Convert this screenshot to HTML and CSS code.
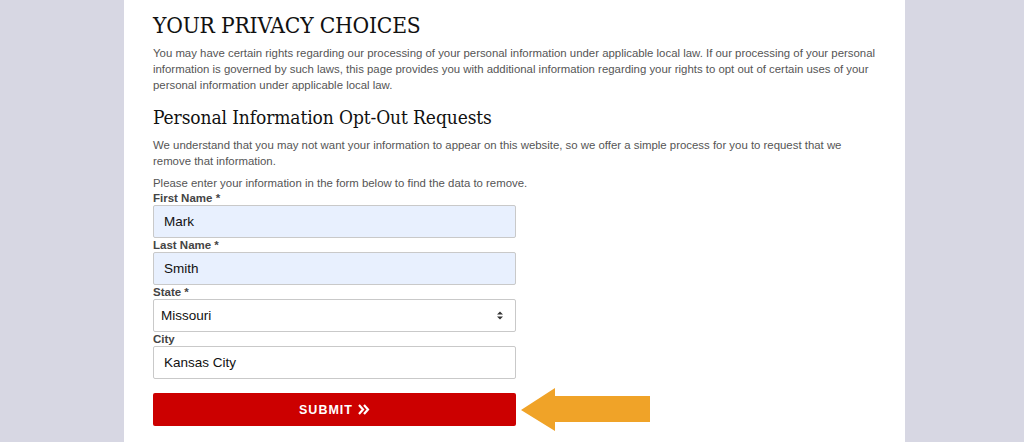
FILE: index.html
```html
<!DOCTYPE html>
<html>
<head>
<meta charset="utf-8">
<link rel="stylesheet" href="styles.css">
</head>
<body>
<main class="page">
  <h1 class="title">YOUR PRIVACY CHOICES</h1>
  <p class="text">You may have certain rights regarding our processing of your personal information under applicable local law. If our processing of your personal information is governed by such laws, this page provides you with additional information regarding your rights to opt out of certain uses of your personal information under applicable local law.</p>
  <h2 class="subtitle">Personal Information Opt-Out Requests</h2>
  <p class="text second">We understand that you may not want your information to appear on this website, so we offer a simple process for you to request that we remove that information.</p>
  <p class="text intro">Please enter your information in the form below to find the data to remove.</p>
  <div class="form-row">
    <form class="form">
      <label class="label">First Name *</label>
      <div class="field filled">Mark</div>
      <label class="label">Last Name *</label>
      <div class="field filled">Smith</div>
      <label class="label">State *</label>
      <div class="field select">Missouri
        <svg class="caret" width="6" height="9" viewBox="0 0 6 9"><path d="M0 3.5 L3 0.5 L6 3.5Z M0 5.5 L3 8.5 L6 5.5Z" fill="#333"/></svg>
      </div>
      <label class="label">City</label>
      <div class="field">Kansas City</div>
      <div class="button">SUBMIT
        <svg class="chev" width="12" height="11" viewBox="0 0 12 11"><path d="M1 1 L5 5.5 L1 10 M6 1 L10 5.5 L6 10" fill="none" stroke="#fff" stroke-width="2.2"/></svg>
      </div>
    </form>
    <svg class="arrow" width="130" height="44" viewBox="0 0 130 44"><path d="M0 22 L34 0 L34 8 L129 8 L129 34 L34 34 L34 43 Z" fill="#f0a328"/></svg>
  </div>
</main>
</body>
</html>
```
FILE: styles.css
```css
html, body { margin: 0; padding: 0; }
body {
  background: #d7d7e3;
  font-family: "Liberation Sans", Arial, sans-serif;
  height: 442px;
  overflow: hidden;
}
.page {
  background: #fff;
  width: 781px;
  margin-left: 124px;
  padding: 10px 26px 0 29px;
  box-sizing: border-box;
  height: 442px;
}
.title {
  font-family: "DejaVu Serif Condensed", "DejaVu Serif", serif;
  font-stretch: condensed;
  font-weight: normal;
  font-size: 22.6px;
  color: #111;
  margin: 0 0 5px 0;
  line-height: 30px;
  letter-spacing: -0.2px;
}
.text {
  font-size: 11.4px;
  line-height: 16px;
  color: #555;
  margin: 0 0 12px 0;
}
.subtitle {
  font-family: "DejaVu Serif Condensed", "DejaVu Serif", serif;
  font-stretch: condensed;
  font-weight: normal;
  font-size: 19px;
  color: #111;
  margin: 7px 0 8px 0;
  line-height: 24px;
  letter-spacing: -0.1px;
}
.second { margin-bottom: 7px; }
.intro { margin-bottom: 0; line-height: 15px; }
.form-row {
  display: flex;
  align-items: flex-end;
  gap: 5px;
}
.form {
  width: 363px;
  display: flex;
  flex-direction: column;
}
.label {
  font-size: 11.5px;
  font-weight: bold;
  color: #444;
  line-height: 14px;
}
.field {
  height: 33px;
  box-sizing: border-box;
  border: 1px solid #c9c9c9;
  border-radius: 2px;
  padding: 0 10px;
  font-size: 13.5px;
  color: #111;
  display: flex;
  align-items: center;
}
.field.filled { background: #e8f0fe; }
.field.select { padding-left: 7px; justify-content: space-between; }
.caret { margin-right: 2px; }
.button {
  margin-top: 14px;
  height: 33px;
  background: #cc0000;
  border-radius: 2px;
  color: #fff;
  font-weight: bold;
  font-size: 12.5px;
  letter-spacing: 1px;
  display: flex;
  align-items: center;
  justify-content: center;
  gap: 5px;
}
.arrow { margin-bottom: -6px; }
```
